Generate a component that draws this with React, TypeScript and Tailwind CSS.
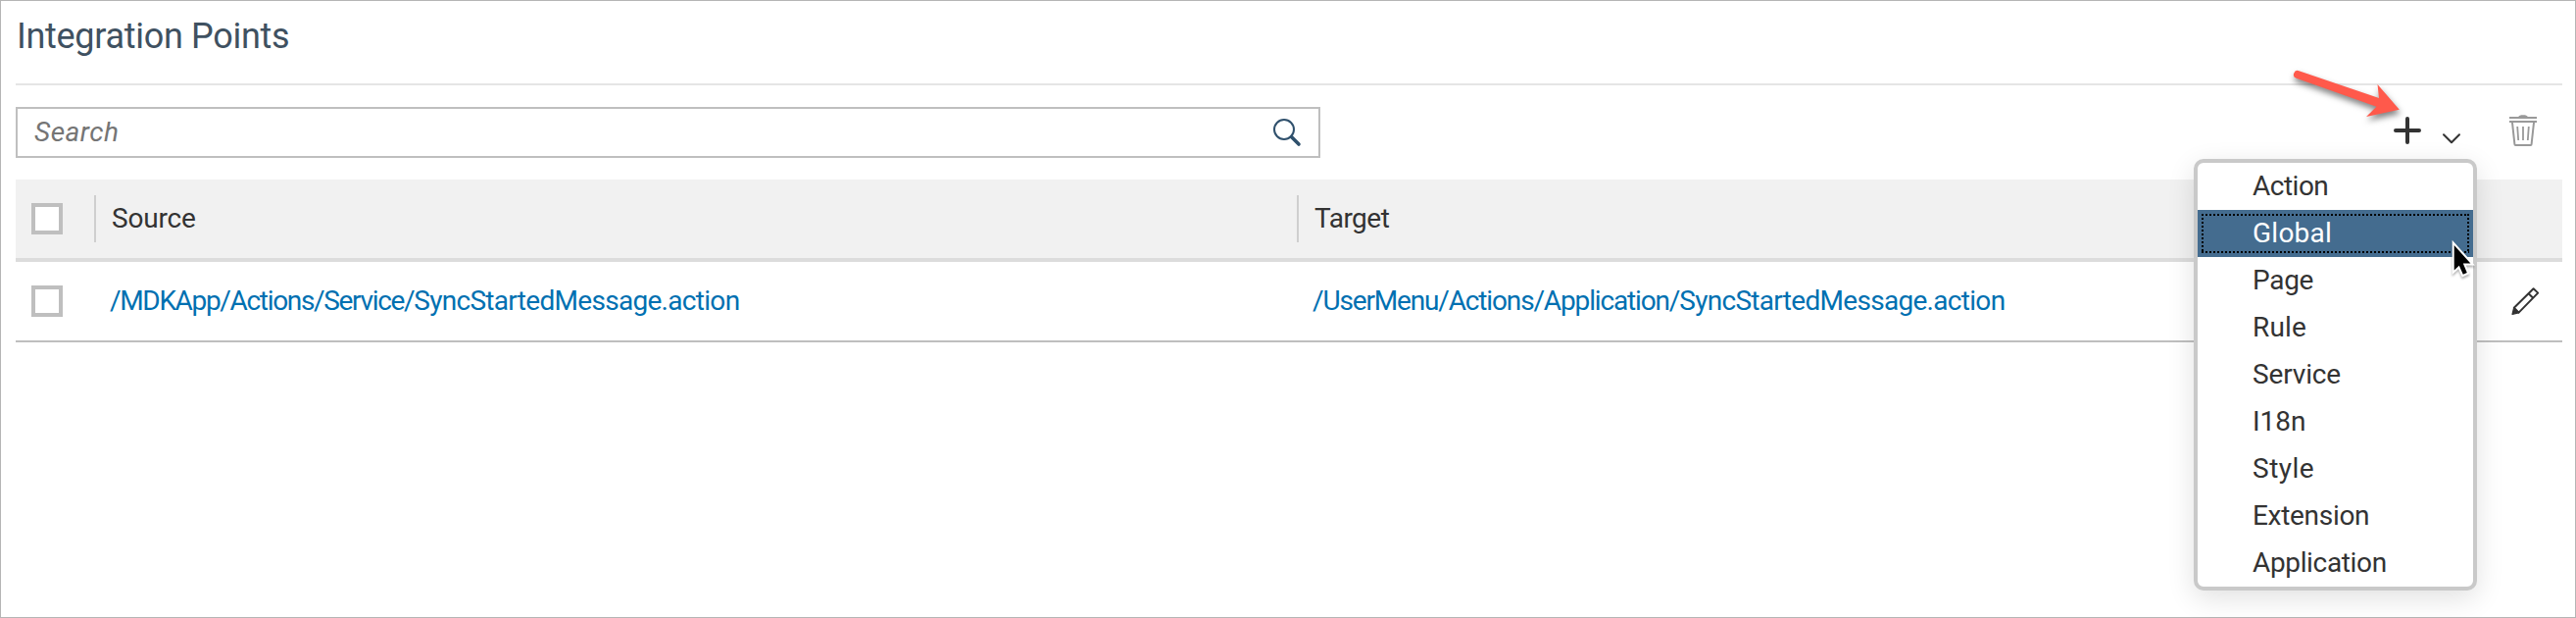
const menuItems = [
  { label: "Action", tracking: "tracking-[-0.5px]" },
  { label: "Global", tracking: "tracking-[0.25px]" },
  { label: "Page", tracking: "tracking-[-0.3px]" },
  { label: "Rule", tracking: "tracking-[0.2px]" },
  { label: "Service", tracking: "tracking-[-0.15px]" },
  { label: "I18n", tracking: "tracking-normal" },
  { label: "Style", tracking: "tracking-[0.5px]" },
  { label: "Extension", tracking: "tracking-[-0.3px]" },
  { label: "Application", tracking: "tracking-[-0.35px]" },
];

function Checkbox() {
  return <span role="checkbox" aria-checked="false" className="block size-8 border-4 border-[#bfbfbf] bg-white" />;
}

function SearchIcon() {
  return (
    <svg width="30" height="30" viewBox="0 0 30 30" fill="none" stroke="#2f506c">
      <circle cx="12" cy="12" r="10" strokeWidth="2" />
      <path d="M19.5 19.5 27 27" strokeWidth="3.6" strokeLinecap="round" />
    </svg>
  );
}

function TrashIcon() {
  return (
    <svg width="28" height="32" viewBox="0 0 28 32" fill="none" stroke="#999999" strokeWidth="2">
      <path d="M0 3H28M0 7H28" />
      <path d="M9 2.4C10 .6 11 .2 14 .2s4 .4 5 2.2z" fill="#999999" stroke="none" />
      <path d="M3 8 5.4 30a1 1 0 0 0 1 1H21.6a1 1 0 0 0 1-1L25 8" />
      <path d="M8.2 12 9.2 26M14 12V26M19.8 12 18.8 26" strokeWidth="1.8" />
    </svg>
  );
}

function PencilIcon() {
  return (
    <svg width="30" height="30" viewBox="0 0 30 30" fill="none" stroke="#333" strokeWidth="2" strokeLinejoin="round">
      <path d="M2.8 21.8 22.6 2.2 27.2 6.6 7.6 26.6Z" />
      <path d="M1 28.4 2.6 21.8 7.6 26.8Z" fill="#333" strokeWidth="1.2" />
      <path d="M17.6 7.2 22.2 11.7" />
    </svg>
  );
}

export default function App() {
  return (
    <div className="relative h-[630px] w-[2628px] border border-[#b5b5b5] bg-white pr-[13px] pl-[15px] font-[Roboto,sans-serif] text-[28px] leading-8 text-[#333]">
      <header className="flex h-[86px] items-start border-b-2 border-[#e5e5e5] pt-[15px] pl-px">
        <h1 className="text-[36px] leading-[42px] tracking-[-0.3px] text-[#3f5161]">Integration Points</h1>
      </header>

      <div className="flex h-24 items-center justify-between">
        <div className="flex h-[52px] w-[1331px] items-center justify-between border-2 border-[#bfbfbf] pr-[17px] pl-[17px]">
          <span className="tracking-[0.5px] text-[#757575] italic">Search</span>
          <SearchIcon />
        </div>
        <div className="flex h-full items-start pt-[30px] pr-[26px]">
          <svg width="28" height="28" viewBox="0 0 28 28" stroke="#333" strokeWidth="4" strokeLinecap="round" className="mt-0.5">
            <path d="M14 2V26M2 14H26" />
          </svg>
          <svg width="20" height="12" viewBox="0 0 20 12" fill="none" stroke="#333" strokeWidth="2" strokeLinecap="round" strokeLinejoin="round" className="mt-[18px] ml-[21px]">
            <path d="M2 2.3 10 10.3 18 2.3" />
          </svg>
          <div className="ml-[49px]">
            <TrashIcon />
          </div>
        </div>
      </div>

      <section>
        <div className="flex h-[84px] items-center border-b-4 border-[#dcdcdc] bg-[#f1f1f1] pl-4">
          <Checkbox />
          <div className="ml-8 flex h-12 w-[1227px] items-center border-l-2 border-[#cfcfcf] pl-4 tracking-[-0.2px]">Source</div>
          <div className="flex h-12 items-center border-l-2 border-[#cfcfcf] pl-4 tracking-[-0.5px]">Target</div>
        </div>
        <div className="flex h-[82px] items-center border-b-2 border-[#bfbfbf] pl-4 text-[#0070b1]">
          <Checkbox />
          <a className="ml-12 w-[1227px] tracking-[-0.7px]">
            <span className="tracking-[-1.33px]">/MDKApp/Actions/Service/</span>SyncStartedMessage.action
          </a>
          <a className="tracking-[-0.7px]">
            <span className="tracking-[-1.15px]">/UserMenu/Actions/Application/</span>SyncStartedMessage.action
          </a>
          <span className="mr-[22px] ml-auto">
            <PencilIcon />
          </span>
        </div>
      </section>

      <ul className="absolute top-[161px] left-[2237px] w-[289px] rounded-[10px] border-4 border-[#c9c9c9] bg-white shadow-[0_8px_28px_rgba(0,0,0,0.12)]">
        {menuItems.map(({ label, tracking }) => (
          <li key={label} className={label === "Global" ? "relative flex h-12 items-center bg-[#446c8f] pl-14 text-white" : "flex h-12 items-center pl-14"}>
            <span className={tracking}>{label}</span>
            {label === "Global" && (
              <svg className="absolute inset-1" width="273" height="40" fill="none" stroke="#000" strokeWidth="2" strokeDasharray="2 2">
                <path d="M0 1H273M0 39H273M1 0V40M272 0V40" />
              </svg>
            )}
          </li>
        ))}
      </ul>

      <svg className="absolute top-[65px] left-[2331px] drop-shadow-[1px_4px_3px_rgba(0,0,0,0.5)]" width="122" height="64" viewBox="2332 66 122 64">
        <path d="M2345.3 72.2 2427 100 2425.5 86 2447.8 111.8 2414 119 2424.5 108.7 2342.6 79.8A4 4 0 0 1 2345.3 72.2Z" fill="#ff594b" />
      </svg>

      <svg className="absolute top-[243px] left-[2497px] drop-shadow-[0_2px_1px_rgba(0,0,0,0.3)]" width="32" height="42" viewBox="2498 244 32 42">
        <path d="M2503.7 250V275.5L2508.8 270.8 2512.8 279.8 2516.8 278 2512.8 268.6H2520.4Z" fill="#000" stroke="#fff" strokeWidth="4" paintOrder="stroke" />
      </svg>
    </div>
  );
}
